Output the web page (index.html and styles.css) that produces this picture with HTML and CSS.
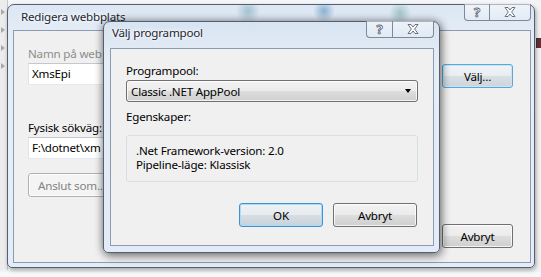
FILE: index.html
```html
<!DOCTYPE html>
<html lang="sv">
<head>
    <meta charset="UTF-8">
    <title>Välj programpool</title>
    <link rel="stylesheet" href="styles.css">
</head>
<body>
    <div class="desk">
        <div class="tree-strip">
            <span class="tri"></span>
            <span class="tri"></span>
            <span class="tri"></span>
            <span class="tri"></span>
        </div>
        <div class="back-strip">
            <span class="back-mark"></span>
        </div>

        <!-- parent window -->
        <div class="win outer">
            <div class="titlebar">
                <span class="title">Redigera webbplats</span>
                <div class="caption">
                    <span class="cap help">?</span>
                    <span class="cap close">
                        <svg width="12" height="10" viewBox="0 0 12 10"><polygon points="1,0.5 4,0.5 6,3 8,0.5 11,0.5 7.6,5 11,9.5 8,9.5 6,7 4,9.5 1,9.5 4.4,5" /></svg>
                    </span>
                </div>
            </div>
            <div class="client">
                <div class="col-left">
                    <div class="lbl dim"><span>Namn på web</span></div>
                    <div class="field"><span>XmsEpi</span></div>
                    <div class="lbl gap"><span>Fysisk sökväg:</span></div>
                    <div class="field"><span>F:\dotnet\xm</span></div>
                    <button class="btn wide" disabled><span>Anslut som..</span></button>
                </div>
                <div class="col-right">
                    <button class="btn small hot">Välj...</button>
                    <button class="btn small end">Avbryt</button>
                </div>
            </div>
        </div>

        <!-- modal dialog -->
        <div class="win dialog">
            <div class="titlebar">
                <span class="title">Välj programpool</span>
                <div class="caption">
                    <span class="cap help">?</span>
                    <span class="cap close">
                        <svg width="12" height="10" viewBox="0 0 12 10"><polygon points="1,0.5 4,0.5 6,3 8,0.5 11,0.5 7.6,5 11,9.5 8,9.5 6,7 4,9.5 1,9.5 4.4,5" /></svg>
                    </span>
                </div>
            </div>
            <div class="client pad">
                <div class="lbl">Programpool:</div>
                <div class="combo">
                    <span>Classic .NET AppPool</span>
                    <span class="arrow"></span>
                </div>
                <div class="lbl props">Egenskaper:</div>
                <div class="group">
                    <div>.Net Framework-version: 2.0</div>
                    <div>Pipeline-läge: Klassisk</div>
                </div>
                <div class="actions">
                    <button class="btn dlg default">OK</button>
                    <button class="btn dlg">Avbryt</button>
                </div>
            </div>
        </div>
    </div>
</body>
</html>
```

FILE: styles.css
```css
* {
    box-sizing: border-box;
}
body {
    margin: 0;
    font-family: "Noto Sans", sans-serif;
    font-size: 11.6px;
    letter-spacing: -0.2px;
    color: #000;
}
.desk {
    position: relative;
    width: 541px;
    height: 277px;
    overflow: hidden;
    background: linear-gradient(#f4f6f9, #f4f6f9 270px, #e9edf2 271px, #f7f8fa 272px);
}
.tree-strip {
    position: absolute;
    left: 0;
    top: 0;
    width: 8px;
    height: 270px;
    background: #ececec;
    border-right: 1px solid #c9c9c9;
    padding-top: 9px;
    display: flex;
    flex-direction: column;
    gap: 12px;
}
.tri {
    width: 0;
    height: 0;
    margin-left: 1px;
    border-left: 4px solid #a9a9a9;
    border-top: 3px solid transparent;
    border-bottom: 3px solid transparent;
}
.back-strip {
    position: absolute;
    left: 534px;
    top: 0;
    width: 7px;
    height: 270px;
    background: #f3f3f3;
}
.back-mark {
    position: absolute;
    left: 2px;
    top: 38px;
    width: 5px;
    height: 10px;
    border-left: 1px solid #333;
    border-top: 1px solid #333;
    background: #6b2d35;
}

/* window chrome */
.win {
    position: absolute;
    border: 1px solid #55606f;
    border-radius: 7px 7px 5px 5px;
    display: flex;
    flex-direction: column;
}
.outer {
    left: 7px;
    top: 4px;
    width: 528px;
    height: 264px;
    padding: 0 3px 4px 5px;
    background:
        radial-gradient(circle at 240px 6px, rgba(60, 120, 140, 0.35), transparent 12px),
        radial-gradient(circle at 316px 6px, rgba(40, 110, 170, 0.45), transparent 11px),
        radial-gradient(circle at 392px 8px, rgba(50, 130, 120, 0.35), transparent 11px),
        linear-gradient(#dce7f3, #e6eef8 40px, #e3ecf8);
    box-shadow: 1px 2px 4px rgba(0, 0, 0, 0.35);
}
.dialog {
    left: 103px;
    top: 21px;
    width: 337px;
    height: 232px;
    padding: 0 5px 6px 6px;
    background: linear-gradient(#d8e4f1, #e5edf7 40px, #e2ebf7);
    box-shadow: 0 0 8px rgba(0, 0, 0, 0.45), 2px 4px 10px rgba(0, 0, 0, 0.3);
}
.titlebar {
    display: flex;
    justify-content: space-between;
    align-items: flex-start;
}
.outer .titlebar {
    height: 25px;
}
.dialog .titlebar {
    height: 26px;
}
.title {
    color: #1e2633;
    text-shadow: 0 0 6px #fff, 0 0 3px #fff;
    line-height: 15px;
}
.outer .title {
    padding: 4px 0 0 8px;
}
.dialog .title {
    padding: 3px 0 0 2px;
}
.caption {
    display: flex;
    margin-top: -1px;
}
.cap {
    height: 17px;
    display: flex;
    align-items: center;
    justify-content: center;
    border: 1px solid #7d8898;
    border-top: none;
    background: linear-gradient(rgba(255, 255, 255, 0.55), rgba(230, 238, 248, 0.4));
}
.help {
    width: 26px;
    border-radius: 0 0 0 4px;
    border-right: none;
    font-weight: bold;
    font-size: 13px;
    color: #fff;
    -webkit-text-stroke: 0.8px #5a6372;
}
.close {
    width: 42px;
    border-radius: 0 0 4px 0;
}
.outer .help {
    width: 25px;
}
.close svg polygon {
    fill: #fff;
    stroke: #5a6372;
    stroke-width: 0.9;
}

/* client area */
.client {
    flex: 1;
    background: #f0f0f0;
    border: 1px solid #8f9caf;
}
.outer .client {
    display: flex;
    justify-content: space-between;
}
.col-left {
    padding: 15px 0 0 14px;
    display: flex;
    flex-direction: column;
    align-items: flex-start;
}
.col-right {
    display: flex;
    flex-direction: column;
    padding: 33px 17px 14px 0;
}
.lbl {
    line-height: 15px;
    margin-bottom: 2px;
    white-space: nowrap;
}
.dim {
    color: #8d8d8d;
}
.lbl.gap {
    margin-top: 35px;
}
/* these run in under the dialog */
.field {
    width: 250px;
    height: 22px;
    padding: 0 3px;
    line-height: 20px;
    background: #fff;
    border: 1px solid;
    border-color: #c3c7ce #e2e3ea #e3e9ef #e2e3ea;
    white-space: nowrap;
}

/* buttons */
.btn {
    height: 24px;
    padding: 0;
    font-family: inherit;
    font-size: inherit;
    letter-spacing: inherit;
    color: #000;
    border: 1px solid #707070;
    border-radius: 3px;
    background: linear-gradient(#f2f2f2, #ebebeb 50%, #dddddd 51%, #cfcfcf);
    box-shadow: inset 0 0 0 1px rgba(255, 255, 255, 0.75);
}
.btn:disabled {
    color: #838383;
    border-color: #adb2b5;
    background: #f4f4f4;
}
.wide {
    width: 90px;
    margin-top: 14px;
    text-align: left;
    padding-left: 9px;
    white-space: nowrap;
}
.small {
    width: 71px;
}
.end {
    margin-top: auto;
}
.hot {
    border-color: #5aa7d8;
    box-shadow: inset 0 0 0 1px #c4e6f8;
    background: linear-gradient(#f0f4f7, #e8edf1 50%, #d8dfe5 51%, #cdd5dc);
}
.default {
    border-color: #3c93cf;
    box-shadow: inset 0 0 0 1px #a9dcf6;
    background: linear-gradient(#eef2f5, #e6ebef 50%, #d6dde3 51%, #cad2d9);
}

/* dialog contents */
.pad {
    padding: 14px 0 0 15px;
}
.combo {
    width: 292px;
    height: 22px;
    margin-top: 2px;
    padding: 0 6px 0 4px;
    display: flex;
    align-items: center;
    justify-content: space-between;
    border: 1px solid #707070;
    border-radius: 3px;
    background: linear-gradient(#f2f2f2, #ebebeb 50%, #dddddd 51%, #cfcfcf);
    box-shadow: inset 0 0 0 1px rgba(255, 255, 255, 0.75);
}
.arrow {
    width: 0;
    height: 0;
    border-top: 4px solid #000;
    border-left: 3.5px solid transparent;
    border-right: 3.5px solid transparent;
}
.props {
    margin-top: 7px;
}
.group {
    width: 292px;
    margin-top: 11px;
    padding: 8px 8px 9px 9px;
    line-height: 14px;
    border: 1px solid #d5dfe5;
    border-radius: 3px;
}
.actions {
    display: flex;
    justify-content: flex-end;
    gap: 10px;
    padding-right: 16px;
    margin-top: 21px;
}
.dlg {
    width: 84px;
}
```
